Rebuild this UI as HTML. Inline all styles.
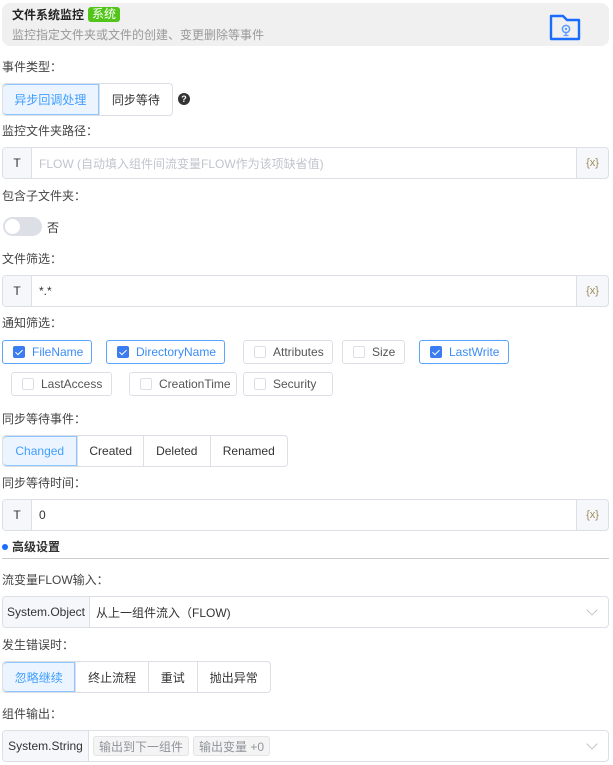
<!DOCTYPE html>
<html><head><meta charset="utf-8"><style>
*{box-sizing:border-box;margin:0;padding:0}
body{width:613px;height:765px;background:#fff;font-family:"Liberation Sans","Noto Sans CJK SC",sans-serif;font-size:12px;color:#333;position:relative;overflow:hidden}
.a{position:absolute}
.lbl{position:absolute;left:2px;font-size:12px;color:#444;line-height:14px}
.hdr{left:2px;top:3px;width:607px;height:43px;background:#f0f0f0;border-radius:8px}
.seg{position:absolute;display:flex;border:1px solid #dcdfe6;border-radius:4px;overflow:hidden;height:32px}
.seg div{display:flex;align-items:center;justify-content:center;border-left:1px solid #dcdfe6;color:#333;font-size:12px;height:100%}
.seg div:first-child{border-left:none}
.seg .on{background:#ecf5ff;color:#409eff;border:1px solid #8cc5ff;border-radius:4px 0 0 4px}
.inp{position:absolute;left:2px;width:607px;height:32px;border:1px solid #dcdfe6;border-radius:4px;display:flex;align-items:center;overflow:hidden}
.pre{height:100%;background:#f5f7fa;border-right:1px solid #dcdfe6;display:flex;align-items:center;justify-content:center;color:#333}
.suf{height:100%;width:32px;background:#f5f7fa;border-left:1px solid #dcdfe6;display:flex;align-items:center;justify-content:center;color:#a08a5a;font-size:11px;margin-left:auto}
.cb{position:absolute;height:24px;border:1px solid #dcdfe6;border-radius:3px;display:flex;align-items:center;padding-left:10px;color:#555;font-size:12px}
.cb i{display:inline-block;width:12px;height:12px;border:1px solid #dcdfe6;border-radius:2px;margin-right:7px;background:#fff;position:relative}
.cb.on{border-color:#5aa5ff;color:#3b8cf5}
.cb.on i{background:#3b7cf0;border-color:#3b7cf0}
.cb.on i:after{content:"";position:absolute;left:3px;top:1px;width:3px;height:6px;border:solid #fff;border-width:0 1.5px 1.5px 0;transform:rotate(45deg)}
.chev{margin-left:auto;margin-right:12px;width:8px;height:8px;border:solid #c0c4cc;border-width:0 1px 1px 0;transform:rotate(45deg);margin-top:-5px}
.tag{background:#f4f4f5;border:1px solid #e4e4e6;border-radius:3px;color:#909399;height:20px;padding:0 5px;display:flex;align-items:center;margin-left:4px;font-size:12px}
</style></head><body>
<div class="a hdr"></div>
<div class="a" style="left:12px;top:8px;font-weight:bold;font-size:12px;color:#222;line-height:14px">文件系统监控</div>
<div class="a" style="left:88px;top:7px;width:32px;height:15px;background:#52c41a;border-radius:3px;color:#fff;font-size:12px;line-height:15px;text-align:center">系统</div>
<div class="a" style="left:12px;top:28px;color:#999;font-size:12px;line-height:14px">监控指定文件夹或文件的创建、变更删除等事件</div>
<svg class="a" style="left:548px;top:13px" width="34" height="29" viewBox="0 0 34 29"><path d="M3 3H15L19 7H31V26H3Z" fill="none" stroke="#1a6cff" stroke-width="2.4" stroke-linejoin="round"/><circle cx="18" cy="16" r="3.6" fill="none" stroke="#5b9bff" stroke-width="1.5"/><circle cx="18" cy="16" r="1.2" fill="#5b9bff"/><path d="M18 20V22M15.5 22.5H20.5" stroke="#5b9bff" stroke-width="1.3"/></svg>

<div class="lbl" style="top:60px">事件类型：</div>
<div class="seg" style="left:2px;top:83px;width:171px;height:33px"><div class="on" style="width:97px">异步回调处理</div><div style="width:74px">同步等待</div></div>
<div class="a" style="left:178px;top:93px;width:12px;height:12px;border-radius:50%;background:#333;color:#fff;font-size:9px;font-weight:bold;text-align:center;line-height:12px">?</div>

<div class="lbl" style="top:124px">监控文件夹路径：</div>
<div class="inp" style="top:147px"><div class="pre" style="width:29px">T</div><span style="margin-left:7px;color:#c0c4cc">FLOW (自动填入组件间流变量FLOW作为该项缺省值)</span><div class="suf">{x}</div></div>

<div class="lbl" style="top:189px">包含子文件夹：</div>
<div class="a" style="left:3px;top:217px;width:39px;height:19px;border-radius:10px;background:#dcdfe6"><div style="position:absolute;left:2px;top:2px;width:15px;height:15px;border-radius:50%;background:#fff"></div></div>
<div class="a" style="left:47px;top:219px;color:#333">否</div>

<div class="lbl" style="top:252px">文件筛选：</div>
<div class="inp" style="top:275px"><div class="pre" style="width:29px">T</div><span style="margin-left:7px;color:#333">*.*</span><div class="suf">{x}</div></div>

<div class="lbl" style="top:316px">通知筛选：</div>
<div class="cb on" style="left:2px;top:340px;width:90px"><i></i>FileName</div>
<div class="cb on" style="left:106px;top:340px;width:119px"><i></i>DirectoryName</div>
<div class="cb" style="left:243px;top:340px;width:90px"><i></i>Attributes</div>
<div class="cb" style="left:342px;top:340px;width:63px"><i></i>Size</div>
<div class="cb on" style="left:419px;top:340px;width:90px"><i></i>LastWrite</div>
<div class="cb" style="left:11px;top:372px;width:101px"><i></i>LastAccess</div>
<div class="cb" style="left:129px;top:372px;width:108px"><i></i>CreationTime</div>
<div class="cb" style="left:243px;top:372px;width:90px"><i></i>Security</div>

<div class="lbl" style="top:412px">同步等待事件：</div>
<div class="seg" style="left:2px;top:435px;width:286px"><div class="on" style="width:75px">Changed</div><div style="width:66px">Created</div><div style="width:67px">Deleted</div><div style="width:78px">Renamed</div></div>

<div class="lbl" style="top:476px">同步等待时间：</div>
<div class="inp" style="top:499px"><div class="pre" style="width:29px">T</div><span style="margin-left:7px;color:#333">0</span><div class="suf">{x}</div></div>

<div class="a" style="left:2px;top:544px;width:6px;height:6px;border-radius:50%;background:#1a6cff"></div>
<div class="a" style="left:12px;top:540px;font-weight:bold;color:#333;line-height:14px">高级设置</div>
<div class="a" style="left:2px;top:558px;width:607px;height:1px;background:#ccc"></div>

<div class="lbl" style="top:573px">流变量FLOW输入：</div>
<div class="inp" style="top:596px"><div class="pre" style="width:87px">System.Object</div><span style="margin-left:6px;color:#333">从上一组件流入（FLOW)</span><div class="chev"></div></div>

<div class="lbl" style="top:638px">发生错误时：</div>
<div class="seg" style="left:2px;top:661px;width:269px"><div class="on" style="width:73px">忽略继续</div><div style="width:73px">终止流程</div><div style="width:49px">重试</div><div style="width:74px">抛出异常</div></div>

<div class="lbl" style="top:707px">组件输出：</div>
<div class="inp" style="top:730px"><div class="pre" style="width:86px">System.String</div><div class="tag">输出到下一组件</div><div class="tag">输出变量 +0</div><div class="chev"></div></div>
</body></html>
